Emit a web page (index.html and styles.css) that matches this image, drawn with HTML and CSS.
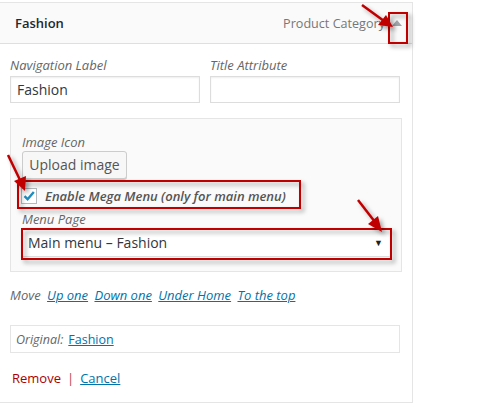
FILE: index.html
```html
<!DOCTYPE html>
<html>
<head>
<meta charset="utf-8">
<link rel="stylesheet" href="styles.css">
</head>
<body>
<div class="panel">
  <div class="header">
    <span class="title">Fashion</span>
    <span class="type">Product Category</span>
    <span class="toggle"></span>
  </div>
  <div class="content">
    <div class="fields">
      <label class="field">
        <span class="lbl">Navigation Label</span>
        <span class="input">Fashion</span>
      </label>
      <label class="field">
        <span class="lbl">Title Attribute</span>
        <span class="input"></span>
      </label>
    </div>
    <div class="extra">
      <div class="lbl">Image Icon</div>
      <div class="btn">Upload image</div>
      <div class="check-row">
        <span class="checkbox">
          <svg width="14" height="14" viewBox="0 0 14 14"><path d="M2.5 7.2 L5.6 10.2 L11.8 3" fill="none" stroke="#1e8cbe" stroke-width="2.4"/></svg>
        </span>
        <span class="check-text">Enable Mega Menu (only for main menu)</span>
      </div>
      <div class="lbl page-lbl">Menu Page</div>
      <div class="select"><span>Main menu – Fashion</span><span class="caret">▼</span></div>
    </div>
    <div class="move">
      <span class="lbl">Move</span>
      <a>Up one</a>
      <a>Down one</a>
      <a>Under Home</a>
      <a>To the top</a>
    </div>
    <div class="original">
      <span class="lbl">Original:</span>
      <a>Fashion</a>
    </div>
    <div class="actions"><span class="remove">Remove</span><span class="sep">|</span><a class="cancel">Cancel</a></div>
  </div>
</div>
<svg class="annot" width="498" height="408" viewBox="0 0 498 408">
  <defs>
    <filter id="sh" x="-20%" y="-20%" width="160%" height="160%">
      <feDropShadow dx="3" dy="3" stdDeviation="2" flood-color="#000" flood-opacity="0.35"/>
    </filter>
  </defs>
  <g filter="url(#sh)" fill="none" stroke="#c00000" stroke-width="2">
    <rect x="389" y="13" width="18" height="30"/>
    <rect x="18" y="181" width="282" height="27"/>
    <rect x="22" y="229" width="369" height="30"/>
  </g>
  <g filter="url(#sh)" fill="#c00000" stroke="#c00000">
    <line x1="362" y1="5" x2="384" y2="21" stroke-width="2.5"/>
    <polygon points="393,27 378,25 386,15" stroke="none"/>
    <line x1="8" y1="155" x2="20" y2="180" stroke-width="2.5"/>
    <polygon points="25,191 14,181 26,176" stroke="none"/>
    <line x1="358" y1="200" x2="375" y2="222" stroke-width="2.5"/>
    <polygon points="382,232 368,224 378,216" stroke="none"/>
  </g>
</svg>
</body>
</html>
```

FILE: styles.css
```css
* { box-sizing: border-box; }
html, body { margin: 0; padding: 0; background: #fff; }
body {
  font-family: "Open Sans", "Liberation Sans", sans-serif;
  font-size: 13px;
  color: #444;
  position: relative;
  width: 498px;
  height: 408px;
  overflow: hidden;
}
.panel {
  margin-top: 2px;
  margin-left: -1px;
  width: 414px;
  border: 1px solid #e5e5e5;
  background: #fff;
}
.header {
  height: 41px;
  background: #fafafa;
  border-bottom: 1px solid #dfdfdf;
  display: flex;
  align-items: center;
  padding-left: 15px;
}
.title { font-weight: 600; color: #23282d; font-size: 13px; }
.type { margin-left: auto; color: #777; font-size: 12.6px; }
.toggle {
  width: 0; height: 0;
  margin: 0 10px 0 7px;
  border-left: 5px solid transparent;
  border-right: 5px solid transparent;
  border-bottom: 6px solid #a0a5aa;
}
.content { padding: 13px 0 12px 10px; }
.lbl { font-style: italic; color: #666; font-size: 13px; }
.fields { display: grid; grid-template-columns: 190px 190px; column-gap: 10px; }
.field { display: flex; flex-direction: column; }
.field .lbl { line-height: 16px; margin-bottom: 3px; }
.input {
  height: 27px;
  border: 1px solid #ddd;
  box-shadow: inset 0 1px 2px rgba(0,0,0,0.07);
  font-size: 14px;
  color: #32373c;
  padding: 3px 6px;
  line-height: 19px;
}
.extra {
  margin-top: 15px;
  width: 392px;
  background: #fafafa;
  border: 1px solid #e5e5e5;
  padding: 14px 11px 14px 11px;
}
.extra .lbl { line-height: 18px; }
.btn {
  display: inline-block;
  height: 28px;
  width: 105px;
  border: 1px solid #ccc;
  border-radius: 3px;
  background: #f7f7f7;
  box-shadow: 0 1px 0 #ccc;
  font-size: 14px;
  color: #555;
  line-height: 26px;
  text-align: center;
}
.check-row { display: flex; align-items: center; margin-top: 8px; height: 18px; }
.checkbox {
  width: 16px; height: 16px;
  margin-left: -1px;
  border: 1px solid #b4b9be;
  background: #fff;
  display: flex; align-items: center; justify-content: center;
}
.check-text { margin-left: 8px; font-weight: 600; font-style: italic; color: #555; font-size: 13px; }
.page-lbl { margin-top: 5px; }
.select {
  margin-top: 1px;
  width: 368px;
  height: 28px;
  background: #fff;
  border-bottom: 1px solid #ddd;
  display: flex;
  align-items: center;
  padding: 0 6px;
  font-size: 14px;
  color: #32373c;
}
.caret { margin-left: auto; font-size: 9px; color: #222; margin-right: 1px; }
.move { margin-top: 14px; line-height: 18px; }
.move a { color: #0073aa; font-style: italic; text-decoration: underline; margin-left: 3px; }
.original {
  margin-top: 21px;
  width: 390px;
  height: 28px;
  border: 1px solid #e5e5e5;
  display: flex;
  align-items: center;
  padding: 0 5px;
}
.original .lbl { font-size: 12.5px; }
.original a { color: #0073aa; text-decoration: underline; margin-left: 5px; font-size: 12.5px; }
.actions { margin-top: 16px; font-size: 13px; line-height: 18px; padding-left: 2px; padding-bottom: 3px; display: flex; }
.remove { color: #a00; }
.sep { color: #b44; margin: 0 3px 0 6px; }
.cancel { color: #0073aa; text-decoration: underline; padding: 0 1px 0 3px; }
.annot { position: absolute; left: 0; top: 0; pointer-events: none; }
```
